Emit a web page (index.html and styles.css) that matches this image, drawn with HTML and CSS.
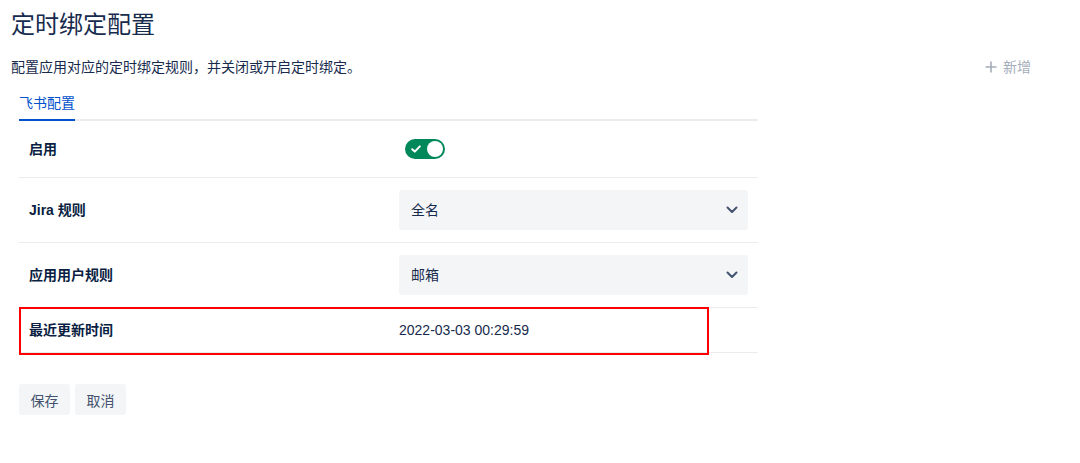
FILE: index.html
```html
<!DOCTYPE html>
<html lang="zh">
<head>
<meta charset="utf-8">
<title>定时绑定配置</title>
<link rel="stylesheet" href="styles.css">
</head>
<body>
<div class="page">
  <h1 class="title">定时绑定配置</h1>
  <div class="header-row">
    <p class="desc">配置应用对应的定时绑定规则，并关闭或开启定时绑定。</p>
    <span class="add-btn">
      <svg class="plus" width="12" height="12" viewBox="0 0 12 12"><path d="M6 0.5v11M0.5 6h11" stroke="#a5adba" stroke-width="1.6" fill="none"/></svg>
      新增
    </span>
  </div>
  <div class="content">
    <div class="tabs">
      <span class="tab active">飞书配置</span>
    </div>
    <div class="table">
      <div class="row row-toggle">
        <div class="label">启用</div>
        <div class="value">
          <span class="toggle">
            <svg class="check" width="10" height="8" viewBox="0 0 10 8"><path d="M1.2 4.2l2.6 2.4L8.8 1.4" stroke="#fff" stroke-width="2" fill="none" stroke-linecap="round" stroke-linejoin="round"/></svg>
            <span class="knob"></span>
          </span>
        </div>
      </div>
      <div class="row row-select">
        <div class="label">Jira 规则</div>
        <div class="value">
          <div class="select">
            <span>全名</span>
            <svg width="12" height="8" viewBox="0 0 12 8"><path d="M1.5 1.5L6 6l4.5-4.5" stroke="#42526e" stroke-width="2" fill="none" stroke-linecap="round" stroke-linejoin="round"/></svg>
          </div>
        </div>
      </div>
      <div class="row row-select">
        <div class="label">应用用户规则</div>
        <div class="value">
          <div class="select">
            <span>邮箱</span>
            <svg width="12" height="8" viewBox="0 0 12 8"><path d="M1.5 1.5L6 6l4.5-4.5" stroke="#42526e" stroke-width="2" fill="none" stroke-linecap="round" stroke-linejoin="round"/></svg>
          </div>
        </div>
      </div>
      <div class="row row-text">
        <div class="label">最近更新时间</div>
        <div class="value date">2022-03-03 00:29:59</div>
      </div>
      <div class="highlight"></div>
    </div>
    <div class="actions">
      <button class="btn">保存</button>
      <button class="btn">取消</button>
    </div>
  </div>
</div>
</body>
</html>
```

FILE: styles.css
```css
* { box-sizing: border-box; }
html, body { margin: 0; padding: 0; background: #fff; }
body {
  font-family: "Liberation Sans", "Noto Sans CJK SC", sans-serif;
  font-size: 14px;
  color: #172b4d;
}
.page {
  padding: 9px 49px 0 11px;
}
.title {
  margin: 0;
  font-size: 24px;
  line-height: 32px;
  font-weight: normal;
  color: #172b4d;
}
.header-row {
  display: flex;
  justify-content: space-between;
  align-items: center;
  margin-top: 16px;
  height: 20px;
}
.desc {
  margin: 0;
  line-height: 20px;
  color: #172b4d;
}
.add-btn {
  display: flex;
  align-items: center;
  gap: 6px;
  color: #a5adba;
  line-height: 20px;
}
.content {
  padding-left: 8px;
}
.tabs {
  margin-top: 16px;
  width: 739px;
  border-bottom: 2px solid #ebecf0;
  display: flex;
}
.tab {
  line-height: 20px;
  padding-bottom: 6px;
  margin-bottom: -2px;
  border-bottom: 2px solid transparent;
}
.tab.active {
  color: #0052cc;
  border-bottom-color: #0052cc;
}
.table {
  position: relative;
  width: 739px;
}
.row {
  display: flex;
  align-items: center;
  border-bottom: 1px solid #ebecf0;
}
.row-toggle { height: 57px; }
.row-select { height: 65px; }
.row-text { height: 45px; }
.label {
  width: 380px;
  padding-left: 10px;
  font-weight: bold;
  color: #091e42;
  line-height: 20px;
}
.value {
  flex: 1;
  padding-right: 10px;
  line-height: 20px;
}
.toggle {
  display: flex;
  align-items: center;
  justify-content: space-between;
  width: 40px;
  height: 20px;
  border-radius: 10px;
  background: #00875a;
  padding: 0 2px 0 6px;
  margin-left: 6px;
}
.knob {
  width: 16px;
  height: 16px;
  border-radius: 50%;
  background: #fff;
}
.select {
  display: flex;
  align-items: center;
  justify-content: space-between;
  height: 40px;
  background: #f4f5f7;
  border-radius: 3px;
  padding: 0 10px 0 12px;
  color: #172b4d;
}
.date {
  color: #172b4d;
}
.highlight {
  position: absolute;
  left: 0;
  top: 186px;
  width: 690px;
  height: 48px;
  border: 2px solid #ff0000;
  pointer-events: none;
}
.actions {
  display: flex;
  gap: 5px;
  margin-top: 31px;
}
.btn {
  height: 31px;
  padding: 0 11.5px;
  border: none;
  border-radius: 3px;
  background: #f4f5f7;
  color: #42526e;
  font-family: inherit;
  font-size: 14px;
}
```
